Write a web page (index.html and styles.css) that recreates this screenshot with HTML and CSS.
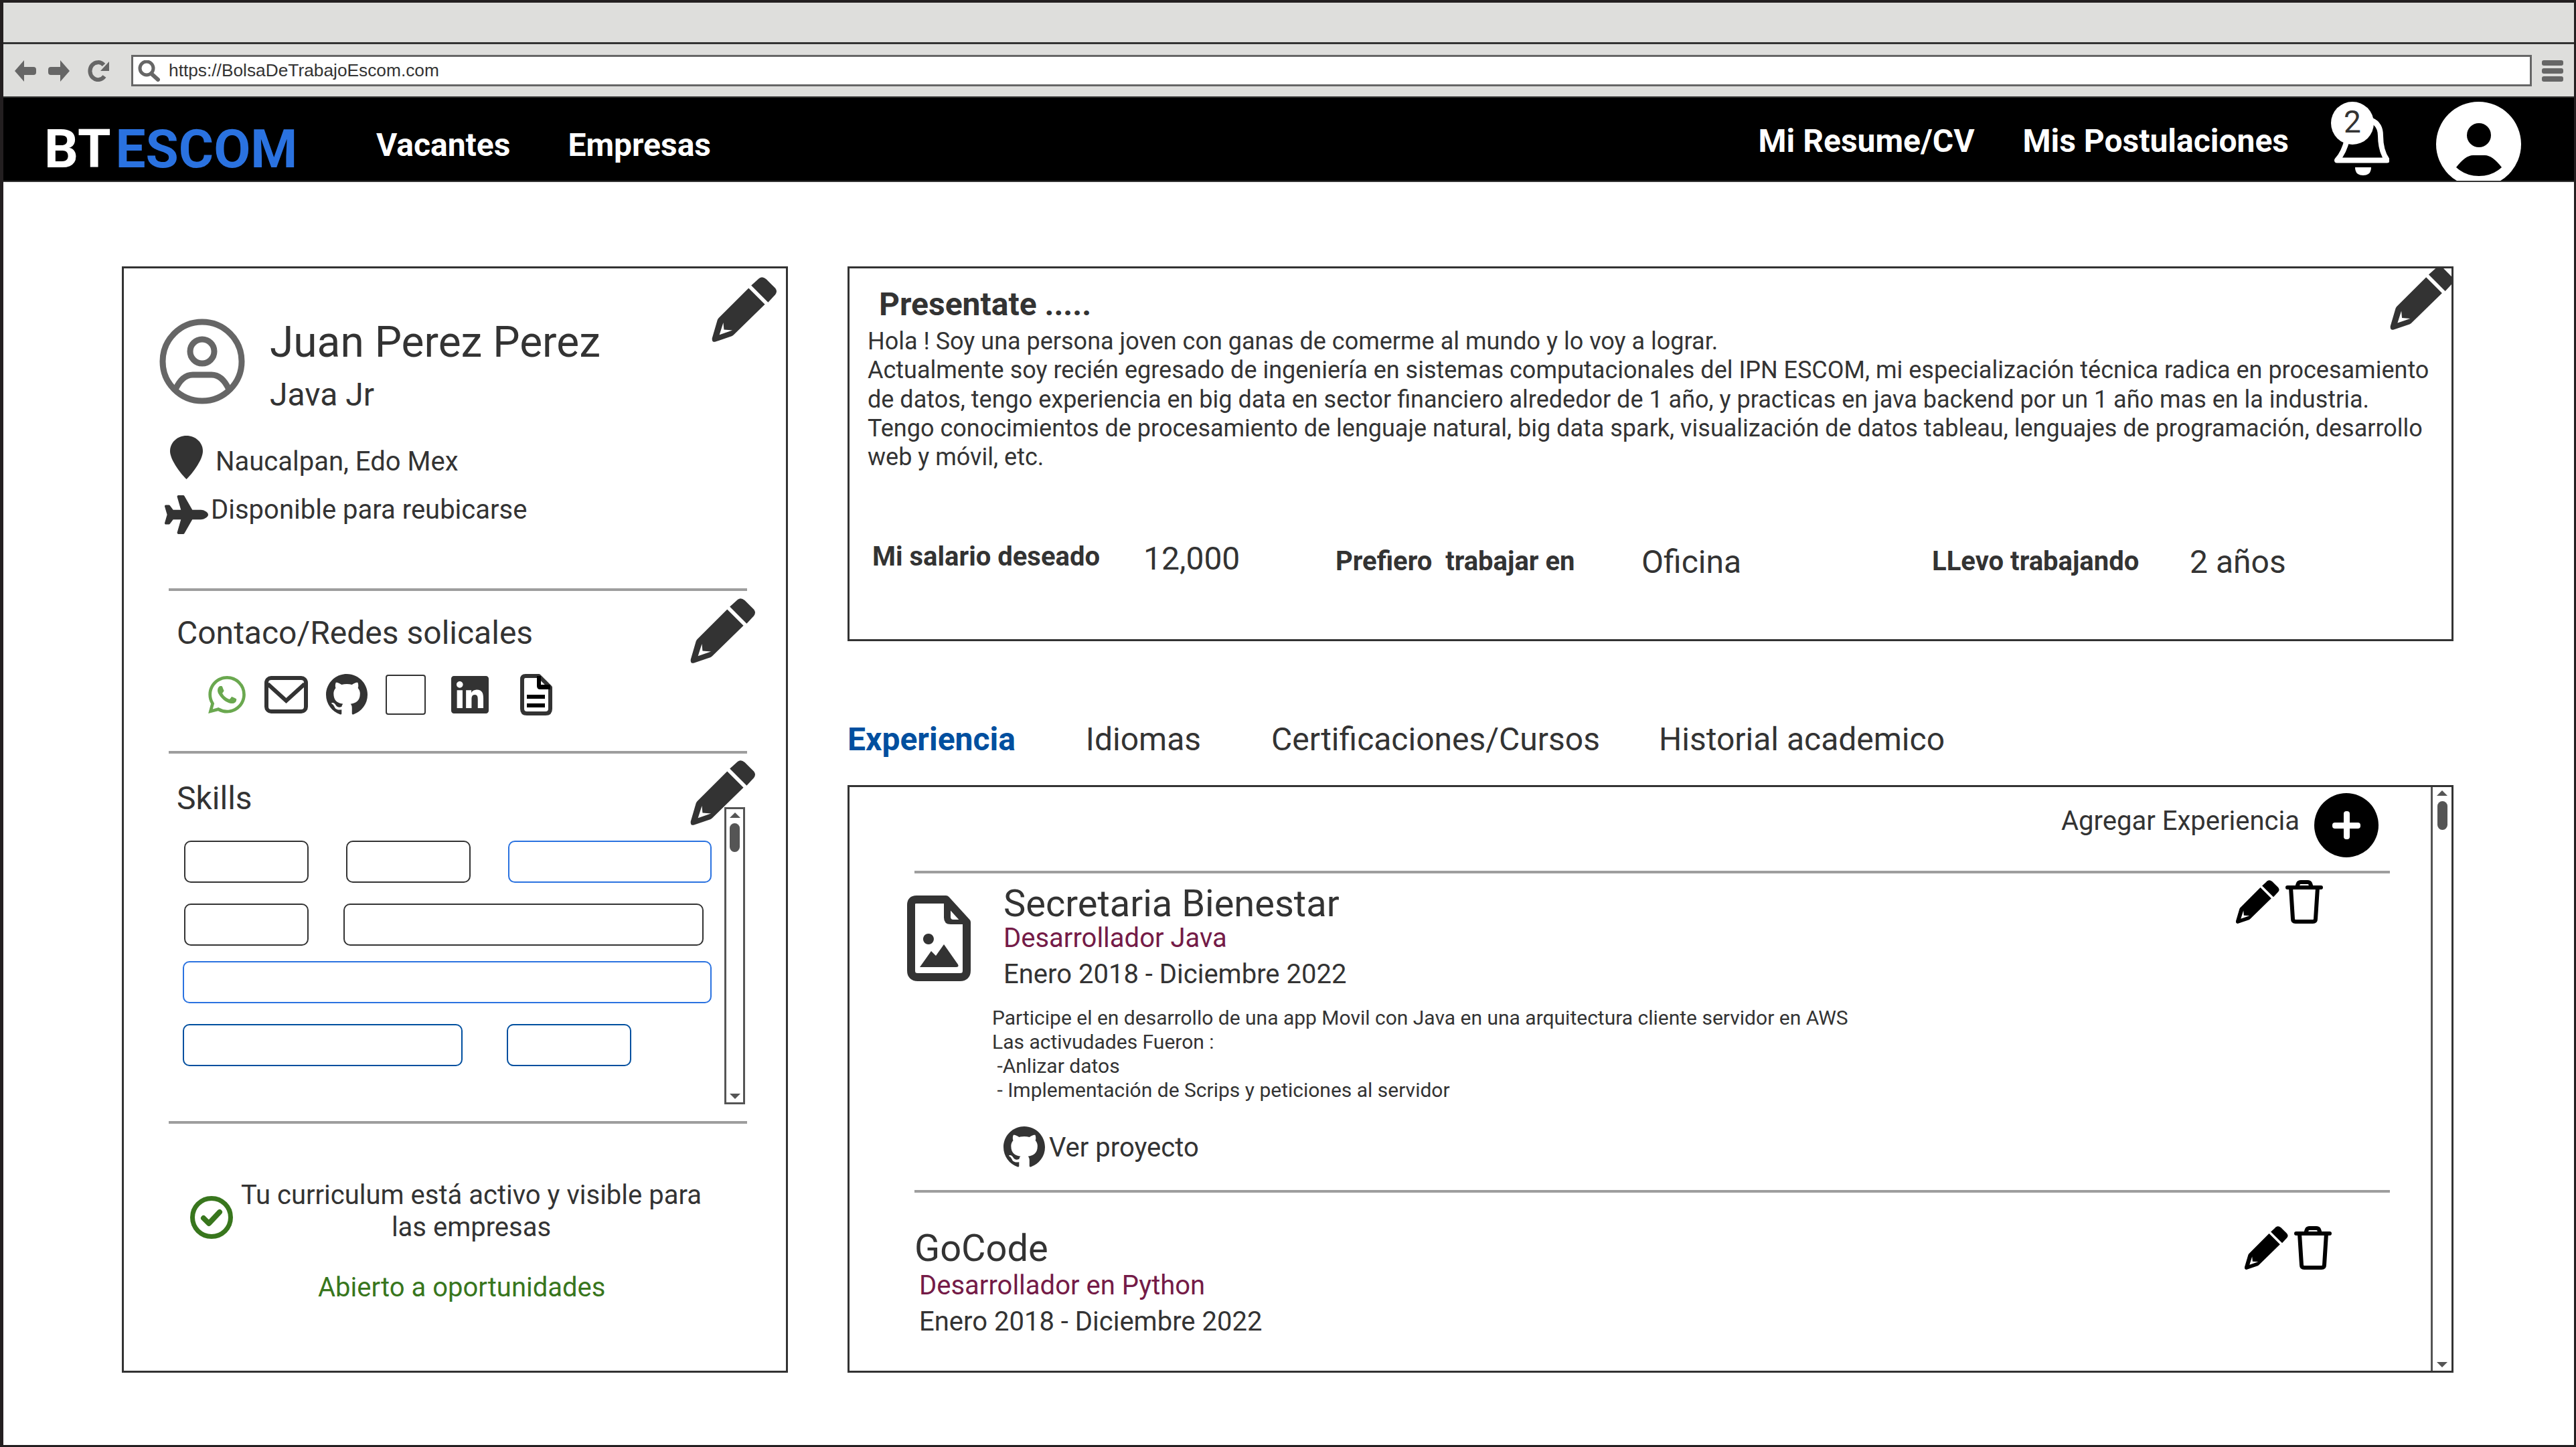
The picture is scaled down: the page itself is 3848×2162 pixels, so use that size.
FILE: index.html
```html
<!DOCTYPE html>
<html lang="es">
<head>
	<meta charset="UTF-8">
	<title>Bolsa de Trabajo ESCOM</title>
	<link rel="stylesheet" href="styles.css">
</head>
<body>

<svg class="sprites" width="0" height="0">
	<symbol id="i-pencil" viewBox="0 0 100 100">
		<path d="M57 17 82 42 34 89Q33 90 31 91L6 99.600Q0 101 .8 94L9 66Q10 64 11 63Z"/>
		<path d="M61 13 87 39 98 27Q102 22 98 17L84 3Q78-2 73 2Z"/>
		<path fill="#fff" d="M18 70 12 89 32 82 19 81Z"/>
	</symbol>
	<symbol id="i-github" viewBox="0 0 16 16">
		<path d="M8 0C3.580 0 0 3.580 0 8c0 3.540 2.290 6.530 5.470 7.590.4.070.55-.17.55-.38 0-.19-.01-.82-.01-1.490-2.010.37-2.530-.49-2.690-.94-.09-.23-.48-.94-.82-1.130-.28-.15-.68-.52-.01-.53.63-.01 1.080.58 1.230.82.72 1.210 1.870.87 2.330.66.07-.52.28-.87.51-1.070-1.780-.2-3.640-.89-3.640-3.950 0-.87.31-1.590.82-2.150-.08-.2-.36-1.020.08-2.120 0 0 .67-.21 2.200.82.64-.18 1.320-.27 2-.27.68 0 1.360.09 2 .27 1.530-1.040 2.200-.82 2.200-.82.44 1.100.16 1.920.08 2.120.51.56.82 1.270.82 2.150 0 3.070-1.870 3.750-3.650 3.950.29.25.54.73.54 1.480 0 1.070-.01 1.930-.01 2.200 0 .21.15.46.55.38A8.013 8.013 0 0016 8c0-4.420-3.580-8-8-8z"/>
	</symbol>
	<symbol id="i-trash" viewBox="0 0 56 65">
		<path fill="none" stroke="currentColor" stroke-width="6" stroke-linecap="round" stroke-linejoin="round" d="M3 11H53M8 11 11 58Q11 62 15 62H41Q45 62 45 58L48 11M17 11 19 5Q20 3 23 3H33Q36 3 37 5L39 11"/>
	</symbol>
</svg>

<div class="window">
	<div class="titlebar"></div>
	<div class="toolbar">
		<svg class="tool-icon" viewBox="0 0 32 32"><path d="M14 0 0 16 14 32V22H28Q32 22 32 18V14Q32 10 28 10H14Z"/></svg>
		<svg class="tool-icon" viewBox="0 0 32 32"><path d="M18 0 32 16 18 32V22H4Q0 22 0 18V14Q0 10 4 10H18Z"/></svg>
		<svg class="tool-icon reload" viewBox="0 0 32 32"><path fill="none" stroke="#666" stroke-width="6" d="M25 24A12 13 0 1 1 24 7"/><path d="M32 2V16H19Z"/></svg>
		<div class="address">
			<svg class="search" viewBox="0 0 33 32"><circle cx="13" cy="12" r="10" fill="none" stroke="#666" stroke-width="5"/><path fill="none" stroke="#666" stroke-width="6" stroke-linecap="round" d="M20 20 30 29"/></svg>
			<span>https://BolsaDeTrabajoEscom.com</span>
		</div>
		<div class="menu"><i></i><i></i><i></i></div>
	</div>

	<nav class="navbar">
		<div class="logo"><span>BT</span><span class="logo-blue">ESCOM</span></div>
		<a class="nav-link">Vacantes</a>
		<a class="nav-link">Empresas</a>
		<a class="nav-link nav-right">Mi Resume/CV</a>
		<a class="nav-link nav-second">Mis Postulaciones</a>
		<div class="bell">
			<svg viewBox="-3 0 86 89"><path fill="none" stroke="#fff" stroke-width="8" stroke-linejoin="round" stroke-linecap="round" d="M44 4Q70 6 70 30 70 52 80 66.500H5Q16 54 20 35"/><path fill="#fff" d="M32 77H56Q56 89 44 89 32 89 32 77Z"/></svg>
			<span class="bell-badge">2</span>
		</div>
		<div class="user">
			<svg viewBox="0 0 127 127"><circle cx="63.500" cy="63.500" r="63.500" fill="#fff"/><circle cx="64" cy="50" r="18"/><path d="M30 98Q44 80 55 80H73Q84 80 98 98 84 111 64 111 44 111 30 98Z"/></svg>
		</div>
	</nav>

	<main class="page">
		<aside class="profile">
			<svg class="pencil pencil-top"><use href="#i-pencil"/></svg>
			<div class="person">
				<svg class="person-icon" viewBox="0 0 128 128">
					<circle cx="64" cy="64" r="59" fill="none" stroke="#666" stroke-width="9"/>
					<circle cx="64" cy="49" r="18" fill="none" stroke="#666" stroke-width="9"/>
					<path fill="none" stroke="#666" stroke-width="9" d="M24 106Q34 84 50 84H78Q94 84 104 106"/>
				</svg>
				<div>
					<h1 class="person-name">Juan Perez Perez</h1>
					<p class="person-role">Java Jr</p>
				</div>
			</div>
			<div class="place">
				<svg class="pin" viewBox="0 0 49 65"><path d="M24.500 0C11 0 0 10 0 23c0 14 18 36 24.500 42C31 59 49 37 49 23 49 10 38 0 24.500 0z"/></svg>
				<span>Naucalpan, Edo Mex</span>
			</div>
			<div class="relocate">
				<svg class="plane" viewBox="0 0 576 512"><path d="M480 192H365.710L260.610 8.060A16.014 16.014 0 0 0 246.710 0h-65.500c-10.630 0-18.300 10.170-15.380 20.390L214.860 192H112l-43.200-57.600c-3.020-4.030-7.770-6.400-12.800-6.400H16.010C5.600 128-2.040 137.780.49 147.880L32 256 .49 364.120C-2.040 374.220 5.600 384 16.010 384H56c5.040 0 9.780-2.370 12.800-6.400L112 320h102.860l-49.030 171.600c-2.920 10.220 4.750 20.400 15.380 20.400h65.500c5.740 0 11.040-3.080 13.890-8.060L365.710 320H480c35.350 0 96-28.650 96-64s-60.650-64-96-64z"/></svg>
				<span>Disponible para reubicarse</span>
			</div>

			<hr class="rule rule-contact">
			<section class="contact">
				<h2 class="side-title">Contaco/Redes solicales</h2>
				<svg class="pencil pencil-side"><use href="#i-pencil"/></svg>
				<div class="socials">
					<svg class="whatsapp" viewBox="0 0 24 24"><path d="M17.472 14.382c-.297-.149-1.758-.867-2.030-.967-.273-.099-.471-.148-.67.150-.197.297-.767.966-.940 1.164-.173.199-.347.223-.644.075-.297-.150-1.255-.463-2.390-1.475-.883-.788-1.480-1.761-1.653-2.059-.173-.297-.018-.458.130-.606.134-.133.298-.347.446-.520.149-.174.198-.298.298-.497.099-.198.050-.371-.025-.520-.075-.149-.669-1.612-.916-2.207-.242-.579-.487-.5-.669-.510-.173-.008-.371-.010-.570-.010-.198 0-.520.074-.792.372-.272.297-1.040 1.016-1.040 2.479 0 1.462 1.065 2.875 1.213 3.074.149.198 2.096 3.200 5.077 4.487.709.306 1.262.489 1.694.625.712.227 1.360.195 1.871.118.571-.085 1.758-.719 2.006-1.413.248-.694.248-1.289.173-1.413-.074-.124-.272-.198-.570-.347m-5.421 7.403h-.004a9.870 9.870 0 01-5.031-1.378l-.361-.214-3.741.982.998-3.648-.235-.374a9.860 9.860 0 01-1.510-5.260c.001-5.450 4.436-9.884 9.888-9.884 2.640 0 5.122 1.030 6.988 2.898a9.825 9.825 0 012.893 6.994c-.003 5.450-4.437 9.884-9.885 9.884m8.413-18.297A11.815 11.815 0 0012.050 0C5.495 0 .16 5.335.157 11.892c0 2.096.547 4.142 1.588 5.945L.057 24l6.305-1.654a11.882 11.882 0 005.683 1.448h.005c6.554 0 11.890-5.335 11.893-11.893a11.821 11.821 0 00-3.480-8.413Z"/></svg>
					<svg class="mail" viewBox="0 0 65 56"><rect x="3" y="3" width="59" height="50" rx="7" fill="none" stroke="#333" stroke-width="6"/><path fill="none" stroke="#333" stroke-width="6" d="M5 12 32.500 37 60 12"/></svg>
					<svg class="github"><use href="#i-github"/></svg>
					<span class="blank-icon"></span>
					<svg class="linkedin" viewBox="0 32 448 448"><path d="M416 32H31.900C14.300 32 0 46.500 0 64.300v383.400C0 465.500 14.300 480 31.900 480H416c17.600 0 32-14.500 32-32.300V64.300c0-17.800-14.400-32.300-32-32.300zM135.400 416H69V202.200h66.500V416zm-33.200-243c-21.300 0-38.500-17.300-38.500-38.500S80.900 96 102.200 96c21.200 0 38.500 17.300 38.500 38.500 0 21.300-17.200 38.500-38.500 38.500zm282.100 243h-66.400V312c0-24.800-.5-56.700-34.500-56.700-34.600 0-39.900 27-39.900 54.900V416h-66.400V202.200h63.700v29.200h.9c8.900-16.800 30.600-34.500 62.900-34.500 67.200 0 79.700 44.300 79.700 101.900V416z"/></svg>
					<svg class="doc" viewBox="0 0 48 62"><path fill="none" stroke="#333" stroke-width="6" stroke-linejoin="round" d="M8 3H28L45 20V52Q45 59 38 59H10Q3 59 3 52V8Q3 3 8 3Z"/><path d="M25 3H31V16H45V23H30Q25 23 25 18ZM10 31H37V37H10ZM10 44H37V50H10Z"/></svg>
				</div>
			</section>

			<hr class="rule rule-skills">
			<section class="skills">
				<div>
					<h2 class="side-title">Skills</h2>
					<div class="tag-row row-a">
						<span class="tag tag-s"></span>
						<span class="tag tag-s"></span>
						<span class="tag tag-l tag-blue"></span>
					</div>
					<div class="tag-row row-b">
						<span class="tag tag-s"></span>
						<span class="tag tag-xl"></span>
					</div>
					<div class="tag-row row-c">
						<span class="tag tag-full tag-blue"></span>
					</div>
					<div class="tag-row row-d">
						<span class="tag tag-m tag-navy"></span>
						<span class="tag tag-s tag-navy"></span>
					</div>
				</div>
				<svg class="pencil pencil-skills"><use href="#i-pencil"/></svg>
				<div class="scroll scroll-skills"><b class="up"></b><i></i><b class="down"></b></div>
			</section>

			<hr class="rule rule-status">
			<div class="status">
				<svg class="check" viewBox="0 0 64 64"><circle cx="32" cy="32" r="28.500" fill="none" stroke="#38761d" stroke-width="7"/><path fill="none" stroke="#38761d" stroke-width="8" stroke-linecap="round" stroke-linejoin="round" d="M20 33 28 41 44 24"/></svg>
				<p>Tu curriculum está activo y visible para<br>las empresas</p>
			</div>
			<p class="open-work">Abierto a oportunidades</p>
		</aside>

		<div class="content">
			<section class="about">
				<svg class="pencil pencil-about"><use href="#i-pencil"/></svg>
				<h2 class="about-title">Presentate .....</h2>
				<p class="about-text">Hola ! Soy una persona joven con ganas de comerme al mundo y lo voy a lograr.<br>
				Actualmente soy recién egresado de ingeniería en sistemas computacionales del IPN ESCOM, mi especialización técnica radica en procesamiento<br>
				de datos, tengo experiencia en big data en sector financiero alrededor de 1 año, y practicas en java backend por un 1 año mas en la industria.<br>
				Tengo conocimientos de procesamiento de lenguaje natural, big data spark, visualización de datos tableau, lenguajes de programación, desarrollo<br>
				web y móvil, etc.</p>
				<div class="stats">
					<strong class="stat-salary">Mi salario deseado</strong><span class="stat-amount">12,000</span>
					<strong class="stat-label">Prefiero&nbsp; trabajar en</strong><span>Oficina</span>
					<strong class="stat-label">LLevo trabajando</strong><span>2 años</span>
				</div>
			</section>

			<ul class="tabs">
				<li class="active">Experiencia</li>
				<li>Idiomas</li>
				<li>Certificaciones/Cursos</li>
				<li class="last">Historial academico</li>
			</ul>

			<section class="experience">
				<div class="exp-body">
					<div class="exp-add">
						<span>Agregar Experiencia</span>
						<span class="add-btn"></span>
					</div>
					<article class="job job-first">
						<div class="job-actions"><svg class="act-pencil"><use href="#i-pencil"/></svg><svg class="act-trash"><use href="#i-trash"/></svg></div>
						<div class="job-head">
							<svg class="file-img" viewBox="0 0 95 128"><path fill="none" stroke="#333" stroke-width="12" stroke-linejoin="round" d="M14 6H58L89 40V112Q89 122 79 122H16Q6 122 6 112V14Q6 6 14 6Z"/><path d="M55 6H65V32Q65 36 69 36H89V43H65Q55 43 55 33ZM32 57A8 8 0 1 1 31.900 57ZM19 107 36 83 43 90 55 73 76 103Q78 107 73 107Z"/></svg>
							<div>
								<h3 class="job-name">Secretaria Bienestar</h3>
								<p class="job-role">Desarrollador Java</p>
								<p class="job-date">Enero 2018 - Diciembre 2022</p>
							</div>
						</div>
						<p class="job-desc">Participe el en desarrollo de una app Movil con Java en una arquitectura cliente servidor en AWS<br>
						Las activudades Fueron :<br>
						&nbsp;-Anlizar datos<br>
						&nbsp;- Implementación de Scrips y peticiones al servidor</p>
						<div class="job-link"><svg class="github-link"><use href="#i-github"/></svg><span>Ver proyecto</span></div>
					</article>
					<article class="job job-second">
						<div class="job-actions"><svg class="act-pencil"><use href="#i-pencil"/></svg><svg class="act-trash"><use href="#i-trash"/></svg></div>
						<h3 class="job-name">GoCode</h3>
						<div class="job-sub">
							<p class="job-role">Desarrollador en Python</p>
							<p class="job-date">Enero 2018 - Diciembre 2022</p>
						</div>
					</article>
				</div>
				<div class="scroll scroll-exp"><b class="up"></b><i></i><b class="down"></b></div>
			</section>
		</div>
	</main>
</div>

</body>
</html>
```

FILE: styles.css
```css
html, body {
	margin: 0;
	padding: 0;
	background: #fff;
}
h1, h2, h3, p, ul {
	margin: 0;
	padding: 0;
	font-weight: normal;
}
li {
	list-style: none;
}
.sprites {
	position: absolute;
}
.window {
	width: 3848px;
	height: 2162px;
	box-sizing: border-box;
	border: 3px solid #231f20;
	border-top-width: 4px;
	border-left-width: 5px;
	overflow: hidden;
	font-family: Roboto, "Noto Sans", sans-serif;
	color: #333;
}

/* browser frame */
.titlebar {
	height: 59px;
	background: #dededc;
	border-bottom: 3px solid #333;
}
.toolbar {
	height: 80px;
	box-sizing: border-box;
	background: #dededc;
	border-bottom: 2px solid #333;
	display: flex;
	align-items: flex-start;
	padding: 24px 16px 0 17px;
}
.tool-icon {
	width: 32px;
	height: 32px;
	margin-right: 18px;
	fill: #666;
}
.tool-icon.reload {
	margin-left: 9px;
	margin-right: 33px;
}
.address {
	flex: 1;
	height: 47px;
	margin-top: -8px;
	box-sizing: border-box;
	background: #fff;
	border: 3px solid #666;
	display: flex;
	align-items: center;
	padding-left: 7px;
	font-family: "Liberation Sans", sans-serif;
	font-size: 26.300px;
	color: #333;
}
.search {
	width: 33px;
	height: 32px;
	margin-right: 13px;
}
.menu {
	width: 32px;
	margin-left: 15px;
	display: flex;
	flex-direction: column;
	gap: 4px;
}
.menu i {
	height: 8px;
	background: #666;
	border-radius: 3px;
}

.navbar {
	height: 126px;
	box-sizing: border-box;
	background: #000;
	border-bottom: 2px solid #333;
	display: flex;
	align-items: flex-start;
	color: #fff;
	position: relative;
	overflow: hidden;
}
.logo {
	font-size: 80px;
	font-weight: 700;
	line-height: 94px;
	margin: 30px 0 0 61px;
	display: flex;
	gap: 7px;
	width: 496px;
}
.logo-blue {
	color: #2a72e0;
}
.nav-link {
	font-size: 48px;
	font-weight: 700;
	line-height: 56px;
	margin-top: 43px;
	margin-right: 86px;
}
.nav-right {
	margin-left: auto;
	margin-right: 72px;
	margin-top: 37px;
}
.nav-second {
	margin-right: 64px;
	margin-top: 37px;
}
.bell {
	width: 86px;
	margin-top: 27px;
	margin-right: 70px;
	position: relative;
}
.bell svg {
	width: 86px;
	height: 89px;
	display: block;
}
.bell-badge {
	position: absolute;
	left: -1px;
	top: -21px;
	width: 64px;
	height: 64px;
	background: #fff;
	border-radius: 50%;
	color: #333;
	font-size: 46px;
	line-height: 60px;
	text-align: center;
}
.user {
	margin-top: 6px;
	margin-right: 79px;
}
.user svg {
	width: 127px;
	height: 127px;
	display: block;
}

/* page */
.page {
	display: flex;
	gap: 89px;
	padding: 126px 0 0 177px;
}
.pencil {
	position: absolute;
	fill: #333;
}
.rule {
	border: 0;
	height: 4px;
	background: #9e9e9e;
	margin: 0;
}

/* left card */
.profile {
	width: 995px;
	height: 1653px;
	box-sizing: border-box;
	border: 3px solid #333;
	position: relative;
	flex: none;
}
.pencil-top {
	width: 97px;
	height: 97px;
	right: 14px;
	top: 13px;
}
.person {
	display: flex;
	gap: 37px;
	padding: 75px 0 0 53px;
}
.person-icon {
	width: 128px;
	height: 128px;
	flex: none;
}
.person-name {
	font-size: 64px;
	line-height: 76px;
	margin-top: -2px;
}
.person-role {
	font-size: 48px;
	line-height: 54px;
	margin-top: 13px;
}
.place {
	display: flex;
	align-items: flex-start;
	font-size: 40px;
	line-height: 50px;
	padding: 34px 0 0 69px;
}
.pin {
	width: 49px;
	height: 65px;
	flex: none;
	fill: #333;
	margin-right: 19px;
}
.place span {
	margin-top: 14px;
}
.relocate {
	display: flex;
	font-size: 40px;
	line-height: 50px;
	padding: 24px 0 0 61px;
}
.relocate span {
	margin-top: -3px;
}
.plane {
	width: 65px;
	height: 58px;
	flex: none;
	fill: #333;
	margin-right: 4px;
}
.rule-contact {
	margin: 81px 58px 0 67px;
}
.contact {
	position: relative;
}
.side-title {
	font-size: 48px;
	line-height: 56px;
	padding: 35px 0 0 79px;
}
.pencil-side {
	width: 97px;
	height: 97px;
	right: 46px;
	top: 11px;
}
.socials {
	display: flex;
	align-items: center;
	height: 62px;
	padding: 33px 0 0 126px;
}
.socials svg, .blank-icon {
	flex: none;
}
.whatsapp {
	width: 56px;
	height: 56px;
	fill: #6aa84f;
}
.mail {
	width: 65px;
	height: 56px;
	margin-left: 28px;
}
.github {
	width: 62px;
	height: 62px;
	margin-left: 27px;
	fill: #333;
}
.blank-icon {
	width: 60px;
	height: 60px;
	box-sizing: border-box;
	border: 2px solid #333;
	border-radius: 4px;
	margin-left: 27px;
}
.linkedin {
	width: 56px;
	height: 56px;
	fill: #333;
	margin-left: 38px;
}
.doc {
	width: 48px;
	height: 62px;
	margin-left: 47px;
}
.rule-skills {
	margin: 53px 58px 0 67px;
}
.skills {
	position: relative;
	display: flex;
	height: 549px;
}
.skills .side-title {
	padding-top: 39px;
}
.skills > div:first-child {
	width: 897px;
}
.tag-row {
	display: flex;
	margin-left: 88px;
}
.row-a {
	margin-left: 90px;
	margin-top: 35px;
	gap: 56px;
}
.row-b {
	margin-left: 90px;
	margin-top: 31px;
	gap: 52px;
}
.row-c {
	margin-top: 23px;
}
.row-d {
	margin-top: 31px;
	gap: 66px;
}
.tag {
	height: 63px;
	box-sizing: border-box;
	border: 2px solid #333;
	border-radius: 10px;
	display: block;
}
.tag-blue {
	border-color: #2a72e0;
}
.tag-navy {
	border-color: #004f9f;
}
.tag-s {
	width: 186px;
}
.tag-m {
	width: 418px;
}
.tag-l {
	width: 304px;
}
.tag-xl {
	width: 538px;
}
.tag-full {
	width: 790px;
}
.pencil-skills {
	width: 97px;
	height: 97px;
	right: 46px;
	top: 10px;
}

/* fake scrollbars */
.scroll {
	background: #fff;
	border: 3px solid #555;
	box-sizing: border-box;
	display: flex;
	flex-direction: column;
	align-items: center;
	position: relative;
	flex: none;
}
.scroll i {
	width: 15px;
	height: 43px;
	background: #555;
	border-radius: 8px;
}
.scroll b {
	width: 0;
	height: 0;
	border-left: 8px solid transparent;
	border-right: 8px solid transparent;
}
.scroll .up {
	border-bottom: 8px solid #555;
	margin: 5px 0 8px;
}
.scroll .down {
	border-top: 8px solid #555;
	margin-top: auto;
	margin-bottom: 5px;
}
.scroll-skills {
	width: 31px;
	height: 444px;
	margin-top: 80px;
	z-index: 1;
}

.rule-status {
	margin: 0 58px 0 67px;
}
.status {
	display: flex;
	align-items: flex-start;
	padding: 83px 0 0 99px;
}
.check {
	width: 64px;
	height: 64px;
	flex: none;
	margin-top: 25px;
}
.status p {
	width: 720px;
	margin-left: -4px;
	font-size: 40px;
	line-height: 48px;
	text-align: center;
}
.open-work {
	font-size: 40px;
	line-height: 50px;
	margin: 41px 0 0 290px;
	color: #38761d;
}

/* right column */
.content {
	width: 2399px;
	flex: none;
}
.about {
	height: 560px;
	box-sizing: border-box;
	border: 3px solid #333;
	position: relative;
	padding: 26px 0 0 27px;
}
.pencil-about {
	width: 95px;
	height: 95px;
	right: -3px;
	top: -3px;
}
.about-title {
	font-size: 48px;
	font-weight: 700;
	line-height: 56px;
	margin-left: 17px;
}
.about-text {
	font-size: 36px;
	line-height: 43.300px;
	white-space: nowrap;
	margin-top: 6px;
}
.stats {
	display: grid;
	grid-template-columns: 405px 287px 457px 434px 385px auto;
	align-items: center;
	margin: 101px 0 0 7px;
}
.stats strong {
	font-size: 40px;
	font-weight: 700;
}
.stats span {
	font-size: 48px;
}
.stats .stat-salary {
	margin-bottom: 16px;
}
.stats .stat-amount {
	margin-bottom: 10px;
}
.stats .stat-label {
	margin-bottom: 2px;
}
.tabs {
	display: flex;
	gap: 105px;
	font-size: 48px;
	line-height: 56px;
	margin-top: 119px;
}
.tabs .active {
	color: #004f9f;
	font-weight: 700;
}
.tabs .last {
	margin-left: -17px;
}
.experience {
	height: 878px;
	margin-top: 40px;
	box-sizing: border-box;
	border: 3px solid #333;
	display: flex;
}
.exp-body {
	flex: 1;
	min-width: 0;
	overflow: hidden;
}
.scroll-exp {
	width: 31px;
	height: 100%;
	border-width: 0 0 0 3px;
}
.exp-add {
	height: 125px;
	box-sizing: border-box;
	padding: 9px 0 0 1810px;
	display: flex;
	gap: 22px;
	font-size: 40px;
	line-height: 48px;
	align-items: flex-start;
}
.exp-add span:first-child {
	margin-top: 18px;
}
.add-btn {
	width: 96px;
	height: 96px;
	background: #000;
	border-radius: 50%;
	position: relative;
	flex: none;
}
.add-btn::before, .add-btn::after {
	content: "";
	position: absolute;
	background: #fff;
	border-radius: 4px;
}
.add-btn::before {
	left: 27px;
	top: 44px;
	width: 42px;
	height: 9px;
}
.add-btn::after {
	left: 44px;
	top: 27px;
	width: 9px;
	height: 42px;
}
.job {
	margin: 0 61px 0 97px;
	border-top: 4px solid #9e9e9e;
	position: relative;
}
.job-first {
	height: 473px;
}
.job-head {
	display: flex;
	gap: 49px;
	margin-left: -11px;
	padding-top: 33px;
}
.file-img {
	width: 95px;
	height: 128px;
	flex: none;
	fill: #333;
}
.job-head > div {
	margin-top: -15px;
}
.job-name {
	font-size: 56px;
	line-height: 54px;
}
.job-role {
	font-size: 40px;
	line-height: 50px;
	color: #741b47;
}
.job-date {
	font-size: 40px;
	line-height: 50px;
	margin-top: 4px;
}
.job-desc {
	font-size: 30px;
	line-height: 36px;
	margin: 22px 0 0 116px;
}
.job-link {
	display: flex;
	gap: 6px;
	align-items: center;
	font-size: 40px;
	margin: 36px 0 0 133px;
}
.github-link {
	width: 62px;
	height: 62px;
	fill: #333;
	flex: none;
}
.job-second .job-name {
	margin-top: 56px;
}
.job-sub {
	margin: 4px 0 0 7px;
}
.job-actions {
	position: absolute;
	right: 100px;
	top: 10px;
	display: flex;
	gap: 9px;
}
.job-second .job-actions {
	right: 87px;
	top: 50px;
}
.act-pencil {
	width: 66px;
	height: 65px;
	fill: #000;
}
.act-trash {
	width: 56px;
	height: 65px;
	color: #000;
}
```
